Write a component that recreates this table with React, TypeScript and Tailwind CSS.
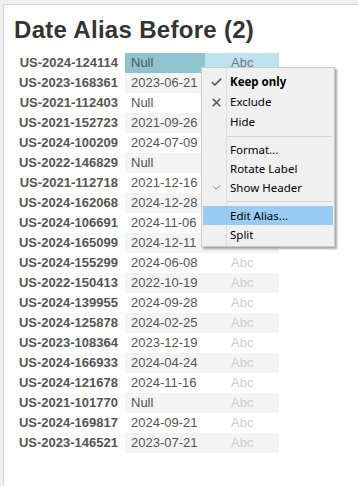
import React from "react";

type Row = { id: string; date: string };

const rows: Row[] = [
  { id: "US-2024-124114", date: "Null" },
  { id: "US-2023-168361", date: "2023-06-21" },
  { id: "US-2021-112403", date: "Null" },
  { id: "US-2021-152723", date: "2021-09-26" },
  { id: "US-2024-100209", date: "2024-07-09" },
  { id: "US-2022-146829", date: "Null" },
  { id: "US-2021-112718", date: "2021-12-16" },
  { id: "US-2024-162068", date: "2024-12-28" },
  { id: "US-2024-106691", date: "2024-11-06" },
  { id: "US-2024-165099", date: "2024-12-11" },
  { id: "US-2024-155299", date: "2024-06-08" },
  { id: "US-2022-150413", date: "2022-10-19" },
  { id: "US-2024-139955", date: "2024-09-28" },
  { id: "US-2024-125878", date: "2024-02-25" },
  { id: "US-2023-108364", date: "2023-12-19" },
  { id: "US-2024-166933", date: "2024-04-24" },
  { id: "US-2024-121678", date: "2024-11-16" },
  { id: "US-2021-101770", date: "Null" },
  { id: "US-2024-169817", date: "2024-09-21" },
  { id: "US-2023-146521", date: "2023-07-21" },
];

const Check = ({ small }: { small?: boolean }) =>
  small ? (
    <svg width="8" height="5" viewBox="0 0 8 5" className="block">
      <path d="M0.5 1.5 L3 4 L7.5 0.5" fill="none" stroke="#888" strokeWidth="1" />
    </svg>
  ) : (
    <svg width="11" height="8" viewBox="0 0 11 8" className="block">
      <path d="M0.8 4 L3.8 7 L10.2 0.6" fill="none" stroke="#555" strokeWidth="1.6" />
    </svg>
  );

const Cross = () => (
  <svg width="9" height="9" viewBox="0 0 9 9" className="block">
    <path d="M0.8 0.8 L8.2 8.2 M8.2 0.8 L0.8 8.2" fill="none" stroke="#555" strokeWidth="1.6" />
  </svg>
);

function MenuItem({
  label,
  icon,
  bold,
  active,
  h,
}: {
  label: string;
  icon?: React.ReactNode;
  bold?: boolean;
  active?: boolean;
  h: string;
}) {
  return (
    <div className={`flex items-center ${h} ${active ? "bg-[#99cbf5] mx-[1px]" : "mx-[1px]"}`}>
      <div className="w-[23px] flex justify-center pl-[4px]">{icon}</div>
      <div className={`pl-[4px] ${bold ? "font-bold" : ""}`}>{label}</div>
    </div>
  );
}

const Separator = ({ h }: { h: string }) => (
  <div className={`${h} flex items-center pl-[25px] pr-[2px]`}>
    <div className="w-full h-[1px] bg-[#d4d4d4]" />
  </div>
);

export default function App() {
  return (
    <div className="w-[358px] h-[486px] bg-[#f0f0f0] pl-[3px] pt-[4px] overflow-hidden">
      <div className="h-full bg-white border-l border-t border-[#d6d6d6] relative">
        <div
          className="pl-[10px] pt-[11px] text-[24px] leading-[28px] font-bold text-[#333] tracking-[0.3px]"
          style={{ fontFamily: '"Liberation Sans", Arial, sans-serif' }}
        >
          Date Alias Before (2)
        </div>

        <div
          className="mt-[9px] text-[13px] leading-[20px]"
          style={{ fontFamily: '"Liberation Sans", Arial, sans-serif' }}
        >
          {rows.map((r, i) => {
            const selected = i === 0;
            const stripe = i % 2 === 1;
            return (
              <div key={r.id} className="flex h-[20px]">
                <div className="w-[114px] text-right font-bold text-[#555]">{r.id}</div>
                <div
                  className={`ml-[7px] w-[80px] pl-[6px] text-[#555] ${
                    selected ? "bg-[#8ec3d0] text-[#333]" : stripe ? "bg-[#f4f4f4]" : ""
                  }`}
                >
                  {r.date}
                </div>
                <div
                  className={`w-[74px] pl-[26px] ${
                    selected ? "bg-[#bde3f0] text-[#777]" : stripe ? "bg-[#f4f4f4] text-[#cfcfcf]" : "text-[#cfcfcf]"
                  }`}
                >
                  Abc
                </div>
              </div>
            );
          })}
        </div>

        {/* context menu over the header cell */}
        <div
          className="absolute left-[197px] top-[62px] w-[134px] bg-[#f0f0f0] border border-[#cbcbcb] shadow-[2px_2px_2px_rgba(0,0,0,0.35)] text-[11.5px] text-black pt-[4px] pb-[2px]"
          style={{ fontFamily: '"Noto Sans", "Open Sans", sans-serif' }}
        >
          <div className="absolute left-[24px] top-0 bottom-0 w-[1px] bg-[#dedede]" />
          <div className="relative">
            <MenuItem h="h-[20px]" label="Keep only" bold icon={<Check />} />
            <MenuItem h="h-[20px]" label="Exclude" icon={<Cross />} />
            <MenuItem h="h-[20px]" label="Hide" />
            <Separator h="h-[8px]" />
            <MenuItem h="h-[19px]" label="Format..." />
            <MenuItem h="h-[19px]" label="Rotate Label" />
            <MenuItem h="h-[19px]" label="Show Header" icon={<Check small />} />
            <Separator h="h-[9px]" />
            <MenuItem h="h-[19px]" label="Edit Alias..." active />
            <MenuItem h="h-[19px]" label="Split" />
          </div>
        </div>
      </div>
    </div>
  );
}
